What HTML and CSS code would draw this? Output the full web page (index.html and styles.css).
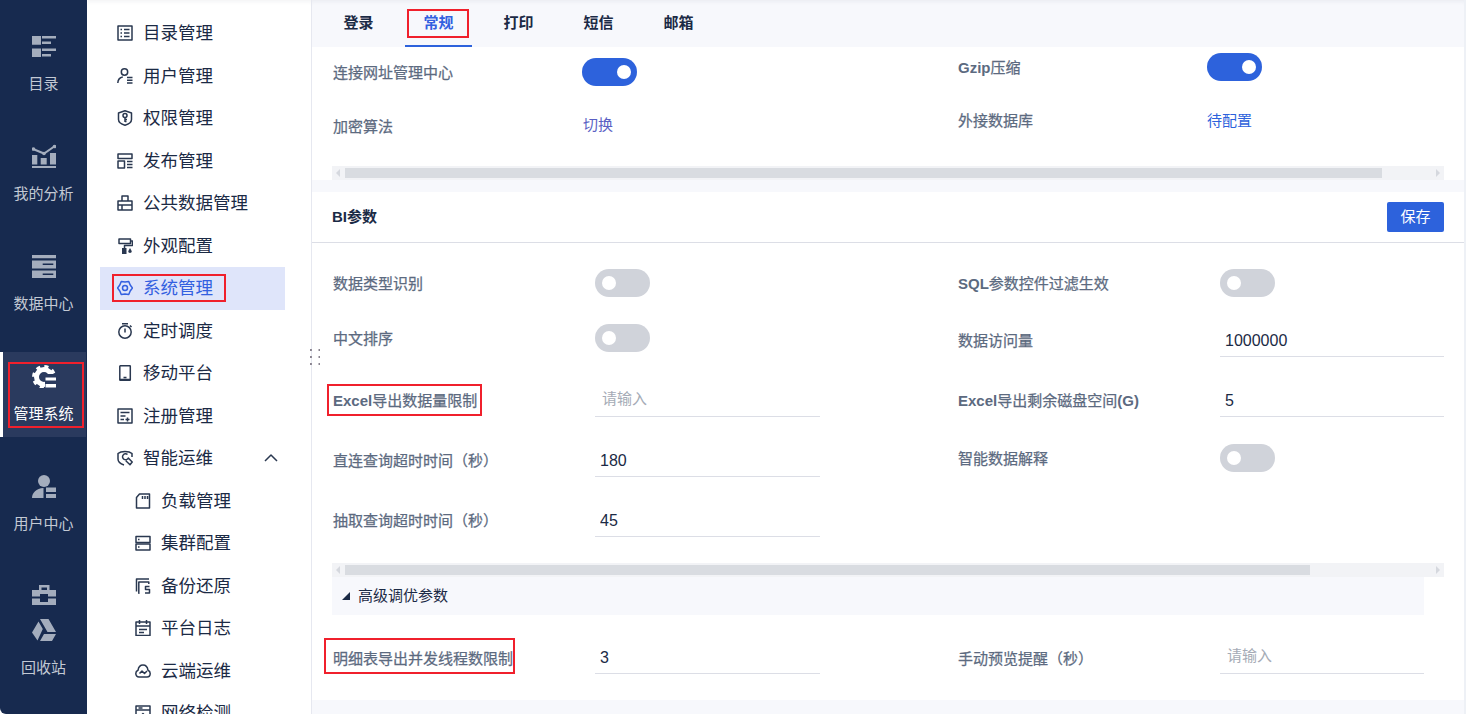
FILE: index.html
```html
<!DOCTYPE html>
<html lang="zh-CN">
<head>
    <meta charset="UTF-8">
    <title>系统管理</title>
    <link rel="stylesheet" href="styles.css">
</head>
<body>
    <!-- 1. 左侧导航 -->
    <nav class="rail">
        <a class="rail-item">
            <svg class="rail-icon" viewBox="0 0 24 24"><path d="M0 2h9v8.700H0zM10 2h14v2.400H10zM10 7.500h9v2.400h-9zM0 14.500h9V23H0zM10 14.500h14v2.400H10zM10 20h9v2.400h-9z"/></svg>
            <span>目录</span>
        </a>
        <a class="rail-item">
            <svg class="rail-icon" viewBox="0 0 24 24"><path d="M0 22h24v2.500H0zM0 11h5.300v9.500H0zM8.700 14h6v6.500h-6zM18 9h6v11.500h-6z"/><path class="line" d="M1 5l11 4.500L23 2"/><circle cx="1.500" cy="5" r="1.800"/><circle cx="12" cy="9.500" r="1.800"/><circle cx="22.500" cy="2.500" r="1.800"/></svg>
            <span>我的分析</span>
        </a>
        <a class="rail-item">
            <svg class="rail-icon" viewBox="0 0 24 24"><path d="M0 1h24v3.300H0zM0 6.500h24v8H0zM0 16.500h24v8H0z"/><path class="cut" d="M10.700 9.500h10.600V11H10.700zM10.700 19.500h10.600V21H10.700z"/></svg>
            <span>数据中心</span>
        </a>
        <a class="rail-item on">
            <svg class="rail-icon" viewBox="0 0 24 24"><circle class="gear-ring" cx="12" cy="13" r="7.500"/><circle class="gear-teeth" cx="12" cy="13" r="10.500"/><path class="cut-on" d="M13 10h11v15H13z"/><path d="M13.500 13.500H24v3H13.500zM13.500 20H24v3.500H13.500z"/></svg>
            <span>管理系统</span>
        </a>
        <a class="rail-item">
            <svg class="rail-icon" viewBox="0 0 24 24"><circle cx="12" cy="7" r="6"/><path d="M0 24.300C0 19 4 14.300 11.500 14v10.300zM14 13.500h10V18H14zM14 20h10v4.300H14z"/></svg>
            <span>用户中心</span>
        </a>
        <a class="rail-item tool">
            <svg class="rail-icon" viewBox="0 0 24 24"><path d="M7 1h10.500v5H15V3.500H9.500V6H7zM0 6h24v6.500h-8V10H8v2.500H0zM0 14.500h8V18h8v-3.500h8V21H0z"/></svg>
        </a>
        <a class="rail-item">
            <svg class="rail-icon" viewBox="0 0 24 24"><path d="M8 1h8.500L24 14h-8.500zM6.500 3.500l4.300 7.500L5.500 22.500 0 14.500zM12 16h12l-4 7H8z"/></svg>
            <span>回收站</span>
        </a>
    </nav>

    <!-- 2. 二级菜单 -->
    <aside class="side">
        <a class="side-item"><svg viewBox="0 0 16 16"><rect x="1" y="1" width="14" height="14"/><path d="M3.500 4.500h1.500M7 4.500h5.500M3.500 8h1.500M7 8h5.500M3.500 11.500h1.500M7 11.500h5.500"/></svg><span>目录管理</span></a>
        <a class="side-item"><svg viewBox="0 0 16 16"><circle cx="7.500" cy="4" r="3.200"/><path d="M.8 15c.2-3.500 2-5.500 5-6M10 9.500h5.500M10 12.300h5.500M10 15h5.500"/></svg><span>用户管理</span></a>
        <a class="side-item"><svg viewBox="0 0 16 16"><path d="M8 .8l6.500 2.200v6.500c0 2.800-3 4.700-6.500 5.700-3.500-1-6.500-2.900-6.500-5.700V3z"/><circle cx="8" cy="5.500" r="2"/><path d="M8 7.500v4.500M8 9.500h2M8 11.500h1.500"/></svg><span>权限管理</span></a>
        <a class="side-item"><svg viewBox="0 0 16 16"><path d="M1 1h14v4.500H1zM1 8h6.500v7H1zM10 8.500h5.500M10 11.500h5.500M10 14.500h5.500"/></svg><span>发布管理</span></a>
        <a class="side-item"><svg viewBox="0 0 16 16"><path d="M1 6h14v9H1zM5 6V1h6v5M1 10h14M5 10v5"/></svg><span>公共数据管理</span></a>
        <a class="side-item"><svg viewBox="0 0 16 16"><path d="M2 1h11.500v4.500H2zM13.500 3H15.500v4.500H7.500V10"/><path class="fill" d="M5 10h4.500v6H5zM13 10l1.800 3.200a1.800 1.800 0 0 1-3.600 0z"/></svg><span>外观配置</span></a>
        <a class="side-item on mark-side"><svg viewBox="0 0 16 16"><path d="M11.750 1.500L13.200 5l2.300 3-2.300 3-1.450 3.500L8 14l-3.750.5L2.800 11 .5 8l2.300-3 1.450-3.500L8 2z"/><circle cx="8" cy="8" r="2.500"/></svg><span>系统管理</span></a>
        <a class="side-item"><svg viewBox="0 0 16 16"><circle cx="8" cy="9" r="6.200"/><path d="M5 .8h6M8 5.500v4M13 2.500l1.500 1.500"/></svg><span>定时调度</span></a>
        <a class="side-item"><svg viewBox="0 0 16 16"><rect x="2.800" y=".8" width="10.500" height="14.400" rx=".5"/><path d="M6.500 12.500h3M2.800 14.500h10.500"/></svg><span>移动平台</span></a>
        <a class="side-item"><svg viewBox="0 0 16 16"><rect x="1" y="1" width="14" height="14"/><path d="M3.500 4.500h9M3.500 8h5M3.500 11.500h3.500M10.500 9.500v4M8.500 11.500h4"/></svg><span>注册管理</span></a>
        <a class="side-item"><svg viewBox="0 0 16 16"><path d="M15 7V3.500C12 .8 4 .8 1 3.500V9c0 3 3 5 6 6"/><path d="M10.500 4.500a3 3 0 1 0 .8 3.500l3.900 4-2.200 2.800-4.200-4"/></svg><span>智能运维</span>
            <svg class="arrow" viewBox="0 0 14 8"><path d="M1 7l6-6 6 6"/></svg>
        </a>
        <a class="side-item sub"><svg viewBox="0 0 16 16"><path d="M4.500 1H14.500v14H1.500V4.500zM7.500 3v3M10 3v3M12.500 3v3"/></svg><span>负载管理</span></a>
        <a class="side-item sub"><svg viewBox="0 0 16 16"><rect x="1" y="1.500" width="14" height="6"/><rect x="1" y="9" width="14" height="6"/><path d="M3 4.500h1.500M3 12h1.500"/></svg><span>集群配置</span></a>
        <a class="side-item sub"><svg viewBox="0 0 16 16"><path d="M14 1H1.500v12.500M4.500 15.200H3.800V4h10v2M14.500 8.500H10.500v3h4v3.500H10"/></svg><span>备份还原</span></a>
        <a class="side-item sub"><svg viewBox="0 0 16 16"><path d="M1 2h14v13.500H1zM4.500 0v4M11.500 0v4M1 6h14M4 9.500h8M4 12.500h5"/></svg><span>平台日志</span></a>
        <a class="side-item sub"><svg viewBox="0 0 16 16"><path d="M4 14C2 14 .8 12.300.8 10.500c0-1.500 1-2.700 2.200-3.200C3.500 4 5.500 2 8 2s4.500 2 5 5.300c1.200.5 2.200 1.700 2.200 3.200 0 1.800-1.200 3.500-3.200 3.500z"/><path d="M4.500 10.500L7 8l2.500 2.500L12 8"/></svg><span>云端运维</span></a>
        <a class="side-item sub"><svg viewBox="0 0 16 16"><rect x="1" y="1" width="14" height="14"/><path d="M1 5h14M3.500 3h4M5 12l3-3.500 3 3.500"/></svg><span>网络检测</span></a>
    </aside>

    <!-- 3. 主体 -->
    <main class="main">
        <span class="drag"></span>

        <div class="tabs">
            <a class="tab">登录</a>
            <a class="tab on">常规</a>
            <a class="tab">打印</a>
            <a class="tab">短信</a>
            <a class="tab">邮箱</a>
        </div>

        <section class="card card-top">
            <div class="top-grid">
                <div class="top-col">
                    <div class="field h50">
                        <label>连接网址管理中心</label>
                        <span class="switch on"></span>
                    </div>
                    <div class="field h58">
                        <label>加密算法</label>
                        <a class="link purple">切换</a>
                    </div>
                </div>
                <div class="top-col right">
                    <div class="field h50">
                        <label><b>Gzip</b>压缩</label>
                        <span class="switch on"></span>
                    </div>
                    <div class="field h56">
                        <label>外接数据库</label>
                        <a class="link">待配置</a>
                    </div>
                </div>
            </div>
            <div class="hscroll"><i></i></div>
        </section>

        <section class="card card-bi">
            <div class="card-head">
                <h3>BI参数</h3>
                <button class="btn">保存</button>
            </div>

            <div class="bi-grid">
                <div class="field h56">
                    <label>数据类型识别</label>
                    <span class="switch"></span>
                </div>
                <div class="field h56">
                    <label><b>SQL</b>参数控件过滤生效</label>
                    <span class="switch"></span>
                </div>
                <div class="field h56">
                    <label>中文排序</label>
                    <span class="switch"></span>
                </div>
                <div class="field h60">
                    <label>数据访问量</label>
                    <input class="ipt wide" value="1000000">
                </div>
                <div class="field h60">
                    <label class="mark mark-excel"><b>Excel</b>导出数据量限制</label>
                    <input class="ipt empty" placeholder="请输入">
                </div>
                <div class="field h60">
                    <label><b>Excel</b>导出剩余磁盘空间<b>(G)</b></label>
                    <input class="ipt wide" value="5">
                </div>
                <div class="field h60">
                    <label>直连查询超时时间（秒）</label>
                    <input class="ipt" value="180">
                </div>
                <div class="field h56">
                    <label>智能数据解释</label>
                    <span class="switch"></span>
                </div>
                <div class="field h60">
                    <label>抽取查询超时时间（秒）</label>
                    <input class="ipt" value="45">
                </div>
            </div>

            <div class="hscroll bi-scroll"><i></i></div>

            <div class="adv"><em></em>高级调优参数</div>

            <div class="bi-grid adv-grid">
                <div class="field h60">
                    <label class="mark mark-detail">明细表导出并发线程数限制</label>
                    <input class="ipt" value="3">
                </div>
                <div class="field h60">
                    <label>手动预览提醒（秒）</label>
                    <input class="ipt empty short" placeholder="请输入">
                </div>
            </div>
        </section>
    </main>
</body>
</html>
```
FILE: styles.css
```css
html,
body {
    margin: 0;
    padding: 0;
    width: 100%;
    height: 100%;
    overflow: hidden;
}

body {
    display: flex;
    background: #fff;
    font: 15px/20px "Liberation Sans", "Noto Sans CJK SC", sans-serif;
    color: #1b2a45;
}

a {
    text-decoration: none;
}

/* 1. 左侧导航 */
.rail {
    flex: none;
    width: 87px;
    margin-right: 1px;
    height: 100%;
    box-sizing: border-box;
    padding-top: 22px;
    background: #172a4f;
    border-bottom-left-radius: 6px;
    overflow: hidden;
}

.rail-item {
    position: relative;
    display: flex;
    flex-direction: column;
    align-items: center;
    box-sizing: border-box;
    height: 85px;
    margin: 0 1px 25px 0;
    padding: 12px 0 0 1px;
    color: #c3c9d4;
}

.rail-item span {
    margin-top: 16px;
}

.rail-icon {
    display: block;
    flex: none;
    width: 24px;
    height: 24px;
    fill: #a4adbd;
}

.rail-icon .line {
    fill: none;
    stroke: #a4adbd;
    stroke-width: 2;
}

.rail-icon .cut {
    fill: #172a4f;
}

.rail-item.tool {
    height: 34px;
    margin-bottom: 0;
}

.rail-item.on {
    background: #2a3a5e;
    box-shadow: inset 3px 0 0 #fff;
    color: #fff;
}

.rail-item.on .rail-icon {
    fill: #fff;
}

.rail-icon .gear-ring {
    fill: none;
    stroke: #fff;
    stroke-width: 5;
}

.rail-icon .gear-teeth {
    fill: none;
    stroke: #fff;
    stroke-width: 3;
    stroke-dasharray: 4.100 4.150;
}

.rail-icon .cut-on {
    fill: #2a3a5e;
}

.rail-item.on::after {
    content: "";
    position: absolute;
    top: 10px;
    left: 8px;
    right: 2px;
    bottom: 9px;
    border: 2px solid #f0202c;
}

/* 2. 二级菜单 */
.side {
    flex: none;
    width: 224px;
    height: 100%;
    box-sizing: border-box;
    padding: 12px 26px 0 12px;
    border-right: 1px solid #e6e8f0;
    box-shadow: inset 0 5px 5px -4px rgba(30, 40, 70, .07);
    overflow: hidden;
}

.side-item {
    position: relative;
    display: flex;
    align-items: center;
    height: 42.5px;
    padding-left: 17px;
    font-size: 17.500px;
    color: #1b2a45;
}

.side-item svg {
    flex: none;
    width: 16px;
    height: 16px;
    margin-right: 10px;
    fill: none;
    stroke: #2a3850;
    stroke-width: 1.500;
    stroke-linejoin: round;
}

.side-item svg .fill {
    fill: #2a3850;
    stroke: none;
}

.side-item .arrow {
    position: relative;
    left: -7px;
    width: 14px;
    height: 8px;
    margin: 0 0 0 auto;
}

.side-item.sub {
    padding-left: 35px;
}

.side-item.on {
    background: #dfe5fa;
    color: #3360e0;
}

.side-item.on svg {
    stroke: #3360e0;
}

.mark-side::after {
    content: "";
    position: absolute;
    top: 7px;
    left: 12px;
    width: 110px;
    height: 24px;
    border: 2px solid #f0202c;
}

/* 3. 主体 */
.main {
    position: relative;
    flex: 1;
    min-width: 0;
    height: 100%;
    box-sizing: border-box;
    border-right: 2px solid #eef1f6;
    background: #f7f8fc;
}

/* 拖动手柄 */
.drag {
    position: absolute;
    top: 349px;
    left: -2px;
    width: 10px;
    height: 16px;
    background: radial-gradient(circle at 1px 1px, #8a8490 1px, transparent 1.200px) 0 0/8.500px 7px;
}

.tabs {
    display: flex;
    gap: 13px;
    height: 47px;
    padding-left: 13px;
    box-sizing: border-box;
    box-shadow: inset 0 5px 5px -4px rgba(30, 40, 70, .07);
}

.tab {
    position: relative;
    box-sizing: border-box;
    width: 67px;
    height: 47px;
    padding-top: 13px;
    text-align: center;
    font-weight: 700;
    color: #1b2a45;
}

.tab.on {
    color: #3360e0;
    border-bottom: 2px solid #2d62dc;
}

.tab.on::after {
    content: "";
    position: absolute;
    top: 9px;
    left: 2px;
    right: 3px;
    height: 25px;
    border: 2px solid #f0202c;
}

.card {
    background: #fff;
}

.card-top {
    height: 133px;
    margin-bottom: 12px;
    padding: 0 20px;
}

.top-grid {
    display: grid;
    grid-template-columns: 625px 1fr;
    height: 119px;
}

.top-col.right {
    margin-top: -5px;
}

.field {
    display: flex;
    align-items: center;
}

.field label {
    flex: none;
    box-sizing: border-box;
    width: 263px;
    padding: 2px 0 0 1px;
    color: #5c6a80;
    -webkit-text-stroke: .25px #5c6a80;
}

.field label b {
    -webkit-text-stroke: 0;
}

.card-top .field label {
    width: 250px;
}

.h50 { height: 50px; }
.h56 { height: 56px; }
.h58 { height: 58px; }
.h60 { height: 60px; }

.switch {
    position: relative;
    width: 55px;
    height: 28px;
    border-radius: 14px;
    background: #d0d3da;
}

.switch::after {
    content: "";
    position: absolute;
    top: 7px;
    left: 7px;
    width: 14px;
    height: 14px;
    border-radius: 50%;
    background: #fff;
}

.switch.on {
    background: #2d62dc;
}

.switch.on::after {
    left: 35px;
}

.link {
    margin-top: 2px;
    color: #2d62dc;
}

.link.purple {
    margin-top: -2px;
    margin-left: 1px;
    color: #5a5fc4;
}

/* 横向滚动条 */
.hscroll {
    position: relative;
    height: 14px;
    padding: 2px 62px 2px 13px;
    box-sizing: border-box;
    background: #f2f3f6;
}

.hscroll i {
    display: block;
    height: 10px;
    background: #d9dce1;
}

.hscroll::before,
.hscroll::after {
    content: "";
    position: absolute;
    top: 3px;
    border-style: solid;
    border-color: transparent #d5d8de;
}

.hscroll::before {
    left: 4px;
    border-width: 4px 4px 4px 0;
}

.hscroll::after {
    right: 4px;
    border-width: 4px 0 4px 4px;
}

.card-bi {
    height: 508px;
    padding: 0 20px;
}

.card-head {
    display: flex;
    align-items: center;
    justify-content: space-between;
    height: 51px;
    margin: 0 -20px;
    padding: 0 20px 1px;
    border-bottom: 1px solid #dcdee6;
    box-sizing: border-box;
}

.card-head h3 {
    margin: 0;
    font-size: 15px;
    font-weight: 700;
}

.btn {
    width: 57px;
    height: 30px;
    padding: 0;
    border: 0;
    border-radius: 2px;
    background: #2d62dc;
    color: #fff;
    font: inherit;
}

.bi-grid {
    display: grid;
    grid-template-columns: 625px 1fr;
    grid-template-rows: 55px 60px 60px 60px 60px;
    padding-top: 12px;
    align-items: start;
}

.ipt {
    flex: none;
    width: 225px;
    height: 32px;
    margin-top: 2px;
    padding: 0 5px;
    box-sizing: border-box;
    border: 0;
    border-bottom: 1px solid #dcdee6;
    outline: 0;
    background: transparent;
    font: 16px "Liberation Sans", "Noto Sans CJK SC", sans-serif;
    color: #1b2a45;
}

.ipt.wide {
    width: 224px;
}

.ipt.empty {
    padding: 0 5px 5px 7px;
    font-size: 15px;
}

.ipt::placeholder {
    color: #a5abb6;
}

.ipt.short {
    width: 204px;
}

.bi-scroll {
    margin-top: 13px;
    padding-right: 134px;
}

.adv {
    display: flex;
    align-items: center;
    width: 1092px;
    height: 38px;
    background: #f7f8fc;
}

.adv em {
    width: 0;
    height: 0;
    margin: 0 8px 0 10px;
    border-style: solid;
    border-width: 0 0 8px 8px;
    border-color: transparent transparent #1b2a45 transparent;
}

.adv-grid {
    grid-template-rows: 60px;
    padding-top: 13px;
}

.adv-grid .ipt {
    margin-top: 0;
}

/* 红色标记框 */
.field .mark {
    position: relative;
}

.mark::after {
    content: "";
    position: absolute;
    border: 2px solid #f0202c;
}

.mark-excel::after {
    top: -5px;
    left: -5px;
    width: 151px;
    height: 28px;
}

.mark-detail::after {
    top: -9px;
    left: -8px;
    width: 187px;
    height: 32px;
}
```
